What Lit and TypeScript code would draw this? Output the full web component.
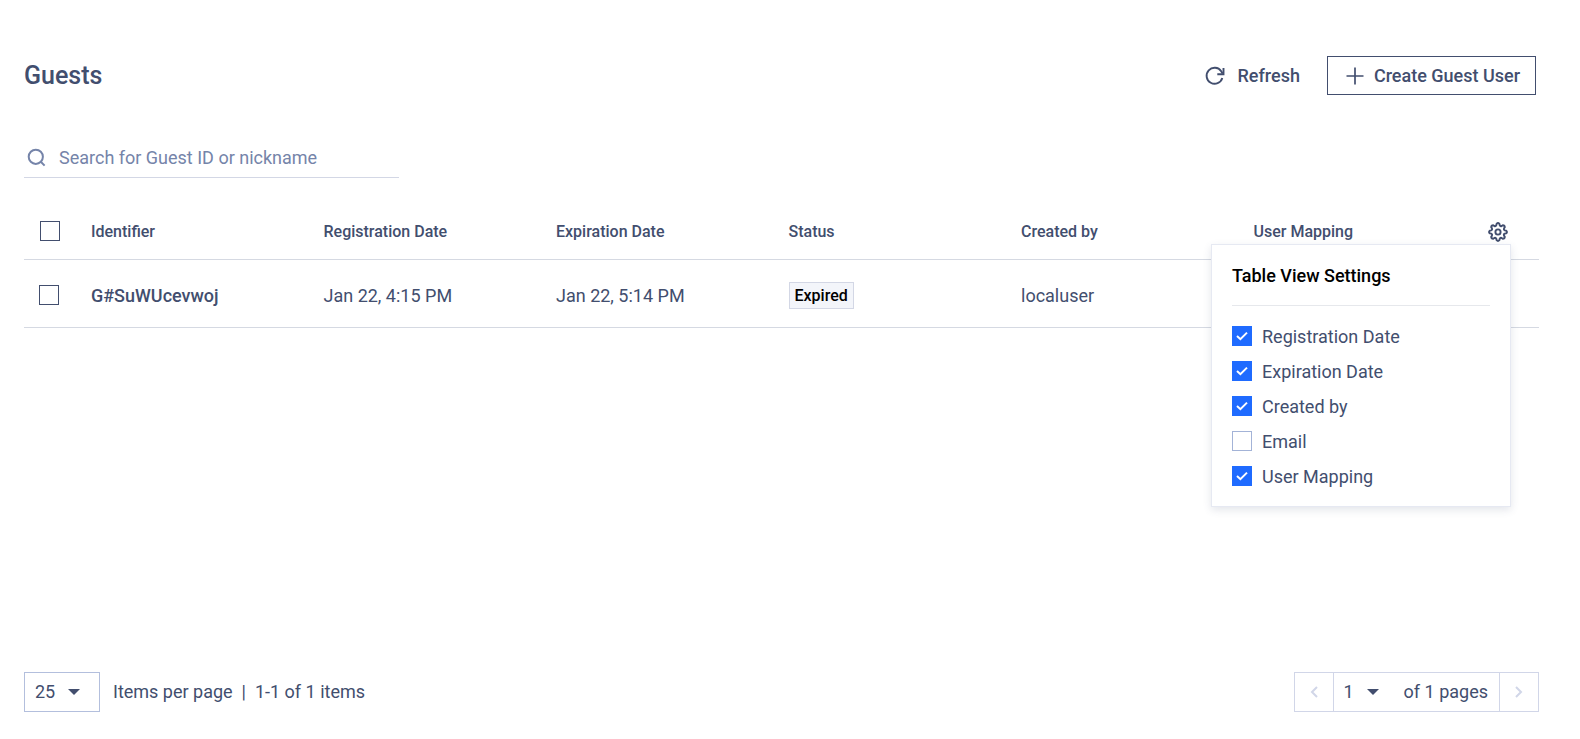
import { LitElement, html, css, svg } from "lit";
import { customElement, state } from "lit/decorators.js";

interface ViewOption {
  id: string;
  label: string;
  on: boolean;
}

interface Guest {
  id: string;
  registered: string;
  expires: string;
  status: string;
  createdBy: string;
  mapping: string;
}

/* Outline of an eight-lobed cog centred on 12,12. */
function cogPath(): string {
  const points: string[] = [];
  const at = (r: number, deg: number) => {
    const a = (deg * Math.PI) / 180;
    return `${(12 + r * Math.sin(a)).toFixed(2)} ${(12 - r * Math.cos(a)).toFixed(2)}`;
  };
  for (let i = 0; i < 8; i++) {
    const c = i * 45;
    points.push(`${i ? "Q" + at(5.9, c - 22.5) + " " : "M"}${at(7, c - 14)}`);
    points.push(`L${at(8.3, c - 10)}`);
    points.push(`Q${at(9.6, c)} ${at(8.3, c + 10)}`);
    points.push(`L${at(7, c + 14)}`);
  }
  return points.join("") + `Q${at(5.9, -22.5)} ${at(7, -14)}Z`;
}

const caret = svg`<path d="M0 0h12L6 6z" fill="currentColor" />`;

@customElement("app-root")
export class AppRoot extends LitElement {
  @state() private menuOpen = true;

  @state() private options: ViewOption[] = [
    { id: "registration", label: "Registration Date", on: true },
    { id: "expiration", label: "Expiration Date", on: true },
    { id: "created", label: "Created by", on: true },
    { id: "email", label: "Email", on: false },
    { id: "mapping", label: "User Mapping", on: true },
  ];

  private guests: Guest[] = [
    {
      id: "G#SuWUcevwoj",
      registered: "Jan 22, 4:15 PM",
      expires: "Jan 22, 5:14 PM",
      status: "Expired",
      createdBy: "localuser",
      mapping: "",
    },
  ];

  static styles = css`
    :host {
      display: flex;
      flex-direction: column;
      box-sizing: border-box;
      min-height: 100vh;
      padding: 56px 41px 27px 24px;
      background: #fff;
      color: #424e6e;
      font: 400 18px/24px Roboto, sans-serif;
    }
    * {
      box-sizing: border-box;
    }
    button,
    input,
    select {
      margin: 0;
      font: inherit;
      color: inherit;
    }
    button {
      padding: 0;
      border: 0;
      background: none;
      cursor: pointer;
    }
    svg {
      display: block;
      flex: none;
    }
    .top {
      display: flex;
      align-items: center;
      justify-content: space-between;
      padding-right: 3px;
    }
    h1 {
      margin: 0;
      font-size: 25px;
      line-height: 32px;
      font-weight: 500;
    }
    .actions {
      display: flex;
      align-items: center;
      gap: 27px;
      font-weight: 500;
    }
    .action {
      display: flex;
      align-items: center;
      gap: 11px;
      height: 39px;
    }
    .boxed {
      gap: 7px;
      padding: 0 15px;
      border: 1px solid #424e6e;
    }
    .search {
      display: flex;
      align-items: center;
      gap: 11px;
      width: 375px;
      max-width: 100%;
      height: 41px;
      margin-top: 42px;
      border-bottom: 1px solid #d3d7e5;
      color: #7584a9;
    }
    .search input {
      flex: 1;
      min-width: 0;
      padding: 2px 0 0;
      border: 0;
      outline: 0;
      background: none;
    }
    .search input::placeholder {
      color: #7584a9;
      opacity: 1;
    }
    table {
      width: 100%;
      margin-top: 24px;
      border-collapse: separate;
      border-spacing: 0;
      table-layout: fixed;
    }
    .pick-col {
      width: 51px;
    }
    .gear-col {
      width: 69px;
    }
    th,
    td {
      border-bottom: 1px solid #d5d9e2;
      text-align: left;
      vertical-align: middle;
    }
    th {
      height: 58px;
      padding: 2px 0 0 16px;
      font-size: 16px;
      font-weight: 500;
    }
    td {
      height: 68px;
      padding: 4px 0 0 16px;
    }
    .name {
      font-weight: 500;
    }
    .pick-all {
      padding-top: 0;
    }
    .pick {
      padding: 2px 0 0 15px;
    }
    .tick {
      display: block;
      appearance: none;
      flex: none;
      width: 20px;
      height: 20px;
      border: 1px solid #424e6e;
      background: #fff;
    }
    .badge {
      display: block;
      width: fit-content;
      padding: 0 5px;
      border: 1px solid #d3d7e5;
      background: #f3f5fa;
      color: #000;
      font-size: 16px;
      line-height: 25px;
      font-weight: 500;
    }
    .gear-cell {
      position: relative;
    }
    .gear {
      display: block;
    }
    .menu {
      position: absolute;
      z-index: 1;
      top: 42px;
      right: 28px;
      width: 300px;
      padding: 19px 20px 20px;
      border: 1px solid #e6e9f2;
      background: #fff;
      box-shadow: 0 3px 8px rgba(66, 78, 110, 0.14);
      font-size: 18px;
      font-weight: 400;
    }
    .menu h2 {
      margin: 0 0 20px;
      padding-bottom: 17px;
      border-bottom: 1px solid #e6e8ec;
      color: #000;
      font-size: 18px;
      line-height: 24px;
      font-weight: 500;
    }
    .options {
      display: grid;
      gap: 15px;
      margin: 0;
      padding: 0;
      list-style: none;
    }
    .option {
      display: flex;
      align-items: flex-start;
      gap: 10px;
      height: 20px;
      line-height: 22px;
    }
    .option .tick {
      border-color: #a3b3d7;
    }
    .option .tick:checked {
      border-color: #1f6bff;
      background: #1f6bff;
    }
    .box {
      display: grid;
    }
    .box > * {
      grid-area: 1 / 1;
    }
    .box svg {
      z-index: 1;
      pointer-events: none;
    }
    .foot {
      display: flex;
      align-items: center;
      justify-content: space-between;
      margin-top: auto;
    }
    .size {
      display: flex;
      align-items: center;
      gap: 13px;
    }
    .drop {
      display: grid;
      align-items: center;
      height: 100%;
    }
    .drop > * {
      grid-area: 1 / 1;
    }
    .drop svg {
      justify-self: end;
      margin-right: 19px;
      pointer-events: none;
    }
    .drop select {
      appearance: none;
      width: 100%;
      height: 100%;
      padding: 0 0 0 10px;
      border: 0;
      border-radius: 0;
      background: none;
    }
    .per-page {
      width: 76px;
      height: 40px;
      border: 1px solid #b3bfdd;
    }
    .range {
      white-space: pre;
    }
    .pager {
      display: flex;
      align-items: center;
      height: 40px;
      border: 1px solid #d1d6e8;
    }
    .step {
      display: flex;
      align-items: center;
      justify-content: center;
      width: 38px;
      height: 100%;
      color: #d1d6e8;
    }
    .pages {
      display: flex;
      align-items: center;
      height: 100%;
      padding-right: 11px;
      border: solid #d1d6e8;
      border-width: 0 1px;
    }
    .page-drop {
      width: 64px;
      margin-right: 6px;
    }
  `;

  private toggle(id: string) {
    this.options = this.options.map((o) => (o.id === id ? { ...o, on: !o.on } : o));
  }

  private renderMenu() {
    return html`
      <div class="menu">
        <h2>Table View Settings</h2>
        <ul class="options">
          ${this.options.map(
            (o) => html`
              <li>
                <label class="option">
                  <span class="box">
                    <input class="tick" type="checkbox" .checked=${o.on} @change=${() => this.toggle(o.id)} />
                    ${o.on
                      ? html`<svg width="20" height="20" viewBox="0 0 20 20" fill="none" stroke="#fff" stroke-width="2">
                          <path d="M5 10l3.4 3.2L15 6.6" />
                        </svg>`
                      : ""}
                  </span>
                  <span>${o.label}</span>
                </label>
              </li>
            `
          )}
        </ul>
      </div>
    `;
  }

  render() {
    return html`
      <header class="top">
        <h1>Guests</h1>
        <div class="actions">
          <button class="action">
            <svg width="22" height="22" viewBox="0 0 22 22" fill="none" stroke="currentColor" stroke-width="1.9">
              <path d="M18.3 13A8 8 0 1 1 17.2 6.2L18.6 8.4" />
              <path d="M19.5 3v6.2h-6.2" />
            </svg>
            Refresh
          </button>
          <button class="action boxed">
            <svg width="24" height="24" viewBox="0 0 24 24" fill="none" stroke="currentColor" stroke-width="1.7">
              <path d="M12 3.5v17M3.5 12h17" />
            </svg>
            Create Guest User
          </button>
        </div>
      </header>

      <label class="search">
        <svg width="24" height="24" viewBox="0 0 24 24" fill="none" stroke="currentColor" stroke-width="2">
          <circle cx="11.8" cy="11.8" r="7.1" />
          <path d="M16.8 16.8l3.8 3.8" />
        </svg>
        <input type="text" aria-label="Search guests" placeholder="Search for Guest ID or nickname" />
      </label>

      <table>
        <colgroup>
          <col class="pick-col" />
          <col span="6" />
          <col class="gear-col" />
        </colgroup>
        <thead>
          <tr>
            <th class="pick-all"><input class="tick" type="checkbox" aria-label="Select all guests" /></th>
            <th>Identifier</th>
            <th>Registration Date</th>
            <th>Expiration Date</th>
            <th>Status</th>
            <th>Created by</th>
            <th>User Mapping</th>
            <th class="gear-cell">
              <button class="gear" aria-label="Table view settings" @click=${() => (this.menuOpen = !this.menuOpen)}>
                <svg width="24" height="24" viewBox="0 0 24 24" fill="none" stroke="currentColor" stroke-width="1.9" stroke-linejoin="round">
                  <path d=${cogPath()} />
                  <circle cx="12" cy="12" r="2.6" />
                </svg>
              </button>
              ${this.menuOpen ? this.renderMenu() : ""}
            </th>
          </tr>
        </thead>
        <tbody>
          ${this.guests.map(
            (g) => html`
              <tr>
                <td class="pick"><input class="tick" type="checkbox" aria-label="Select ${g.id}" /></td>
                <td class="name">${g.id}</td>
                <td>${g.registered}</td>
                <td>${g.expires}</td>
                <td><span class="badge">${g.status}</span></td>
                <td>${g.createdBy}</td>
                <td>${g.mapping}</td>
                <td></td>
              </tr>
            `
          )}
        </tbody>
      </table>

      <footer class="foot">
        <div class="size">
          <div class="drop per-page">
            <select id="per-page" aria-label="Items per page">
              <option>25</option>
            </select>
            <svg width="12" height="6" viewBox="0 0 12 6">${caret}</svg>
          </div>
          <span class="range">Items per page  |  1-1 of 1 items</span>
        </div>
        <nav class="pager" aria-label="Pages">
          <button class="step" aria-label="Previous page">
            <svg width="8" height="12" viewBox="0 0 8 12" fill="none" stroke="currentColor" stroke-width="2">
              <path d="M7 1L2 6l5 5" />
            </svg>
          </button>
          <div class="pages">
            <div class="drop page-drop">
              <select aria-label="Page">
                <option>1</option>
              </select>
              <svg width="12" height="6" viewBox="0 0 12 6">${caret}</svg>
            </div>
            <span>of 1 pages</span>
          </div>
          <button class="step" aria-label="Next page">
            <svg width="8" height="12" viewBox="0 0 8 12" fill="none" stroke="currentColor" stroke-width="2">
              <path d="M1 1l5 5-5 5" />
            </svg>
          </button>
        </nav>
      </footer>
    `;
  }
}
